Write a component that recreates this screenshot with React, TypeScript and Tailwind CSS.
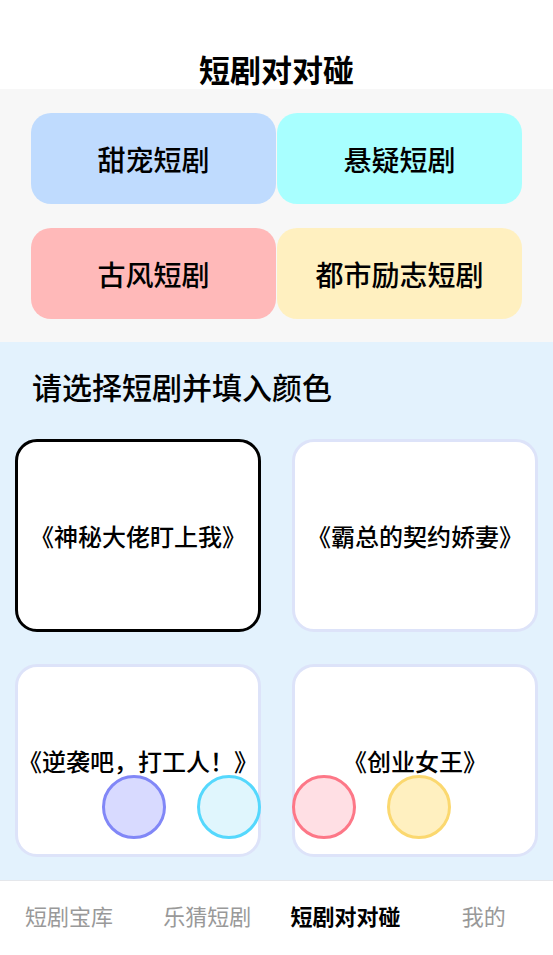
const genres = [
  { name: "甜宠短剧", bg: "bg-[#bfdbfe]" },
  { name: "悬疑短剧", bg: "bg-[#a8ffff]" },
  { name: "古风短剧", bg: "bg-[#ffb9b9]" },
  { name: "都市励志短剧", bg: "bg-[#fff0c0]" },
];

const dramas = [
  { title: "《神秘大佬盯上我》", selected: true },
  { title: "《霸总的契约娇妻》", selected: false },
  { title: "《逆袭吧，打工人！》", selected: false },
  { title: "《创业女王》", selected: false },
];

const swatches = [
  "bg-[#d8daff] border-[#8187f7]",
  "bg-[#e0f6fd] border-[#55d8fd]",
  "bg-[#ffdfe4] border-[#fd7787]",
  "bg-[#fff0c0] border-[#fbd86f]",
];

const tabs = ["短剧宝库", "乐猜短剧", "短剧对对碰", "我的"];

export default function App() {
  return (
    <div className="relative min-h-screen bg-white text-black font-['Noto_Sans_CJK_SC','Noto_Sans',sans-serif]">
      {/* Header */}
      <header className="h-[89px] pt-[50px] text-center">
        <h1 className="text-[31px] leading-[38px] font-bold">短剧对对碰</h1>
      </header>

      {/* Genre picker */}
      <section className="bg-[#f7f7f7] px-[31px] pt-[24px] pb-[23px]">
        <div className="grid grid-cols-2 gap-x-px gap-y-[24px]">
          {genres.map((g) => (
            <div
              key={g.name}
              className={`${g.bg} h-[91px] rounded-[20px] flex items-center justify-center text-[28px] font-medium`}
            >
              {g.name}
            </div>
          ))}
        </div>
      </section>

      {/* Drama cards */}
      <section className="relative bg-[#e3f2fd] h-[538px] pt-[24px]">
        <h2 className="pl-[32px] text-[30px] leading-[40px] font-medium">请选择短剧并填入颜色</h2>
        <div className="mt-[33px] px-[15px] grid grid-cols-2 gap-x-[31px] gap-y-[32px]">
          {dramas.map((d) => (
            <div
              key={d.title}
              className={`h-[193px] rounded-[22px] bg-white flex items-center justify-center text-[24px] font-medium ${
                d.selected ? "border-[3px] border-black" : "border-[3px] border-[#dde3f9]"
              }`}
            >
              {d.title}
            </div>
          ))}
        </div>

        {/* Colour swatches */}
        <div className="absolute left-0 right-0 top-[433px] flex justify-center gap-[31px]">
          {swatches.map((s) => (
            <div key={s} className={`w-[64px] h-[64px] rounded-full border-[3px] ${s}`} />
          ))}
        </div>
      </section>

      {/* Tab bar */}
      <nav className="h-[75px] border-t border-[#e5e7eb] bg-white flex items-start pt-[19px]">
        {tabs.map((t, i) => (
          <div
            key={t}
            className={`flex-1 text-center text-[22px] leading-[30px] ${
              i === 2 ? "font-bold text-black" : "text-[#999999]"
            }`}
          >
            {t}
          </div>
        ))}
      </nav>
    </div>
  );
}
